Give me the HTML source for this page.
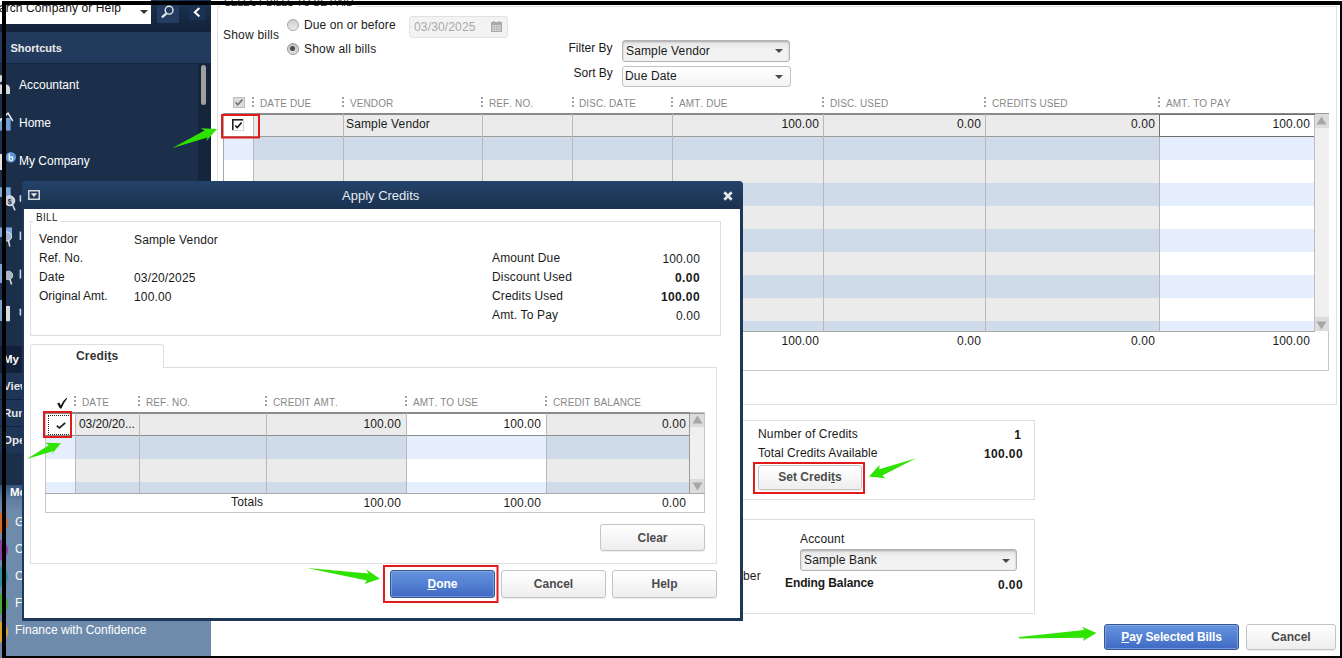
<!DOCTYPE html>
<html>
<head>
<meta charset="utf-8">
<title>Pay Bills - Apply Credits</title>
<style>
*{box-sizing:border-box;margin:0;padding:0}
html,body{width:1342px;height:658px;overflow:hidden;background:#fff}
body{font-family:"Liberation Sans",sans-serif;font-size:12px;color:#1a1a1a;position:relative}
.abs{position:absolute}
.t{position:absolute;white-space:nowrap;line-height:14px;height:14px;letter-spacing:.15px}
.r{text-align:right}
.b{font-weight:bold}
.hdr{position:absolute;white-space:nowrap;font-size:10px;color:#888;line-height:12px;height:12px;letter-spacing:.1px;font-kerning:none}
.dots{position:absolute;width:2px;height:10px;margin-left:-.5px;background:repeating-linear-gradient(to bottom,#a2a2a2 0,#a2a2a2 2px,transparent 2px,transparent 4px)}
.vline{position:absolute;width:1px;background:#b9b9b9}
.box{position:absolute;border:1px solid #dedede}
.btn{position:absolute;border:1px solid #c4c4c4;border-radius:3px;background:linear-gradient(#ffffff,#eeeeee);font-weight:bold;color:#4c4c4c;text-align:center;font-size:12px;box-shadow:0 1px 1px rgba(0,0,0,.08)}
.btn.blue{background:linear-gradient(#6492dc,#5583d4 45%,#3f68c2);border-color:#37558f;color:#fff;box-shadow:inset 0 0 0 1px rgba(150,185,240,.55)}
.sel{position:absolute;border:1px solid #b4b4b4;border-radius:3px;background:linear-gradient(#e4e4e4,#f1f1f1 40%,#f3f3f3);box-shadow:inset 0 1px 2px rgba(0,0,0,.25)}
.sel i{position:absolute;width:0;height:0;border-left:4px solid transparent;border-right:4px solid transparent;border-top:4px solid #4a4a4a}
.red{position:absolute;border:2px solid #e11b1b}
.radio{width:12px;height:12px;border-radius:50%;border:1.500px solid #a8a8a8;background:linear-gradient(#cdcdcd,#ededed)}
.radio.on{border-color:#969696;background:linear-gradient(#c2c2c2,#e2e2e2)}
.radio.on::after{content:"";position:absolute;left:2px;top:2px;width:5px;height:5px;border-radius:50%;background:#4a4a4a}
.side{position:absolute;color:#fff;white-space:nowrap}
u{text-decoration:underline}
</style>
</head>
<body>

<!-- ================= MAIN WINDOW (right) ================= -->
<div id="main" class="abs" style="left:0;top:0;width:1342px;height:658px;background:#fff">
<!-- group: SELECT BILLS TO BE PAID -->
<div class="box" style="left:217px;top:6px;width:1120px;height:399px;border-color:#e0e0e0"></div>
<div class="t" style="left:221px;top:-4px;font-size:10px;color:#222;background:#fff;padding:0 3px;letter-spacing:.07px;font-kerning:none">SELECT BILLS TO BE PAID</div>

<div class="t" style="left:223px;top:28px;letter-spacing:.22px">Show bills</div>
<div class="abs radio" style="left:287px;top:18.500px"></div>
<div class="abs radio on" style="left:287px;top:42.500px"></div>
<div class="t" style="left:304px;top:18px;letter-spacing:.1px">Due on or before</div>
<div class="t" style="left:304px;top:42px;letter-spacing:.22px">Show all bills</div>
<div class="abs" style="left:409px;top:16px;width:99px;height:22px;border:1px solid #e2e2e2;border-radius:3px;background:#f3f3f3"></div>
<div class="t" style="left:414px;top:20px;color:#a9a9a9;letter-spacing:.15px">03/30/2025</div>
<svg class="abs" style="left:491px;top:21px" width="11" height="11" viewBox="0 0 11 11"><rect x="0" y="1" width="11" height="10" fill="#aaa"/><rect x="2" y="0" width="1.5" height="2" fill="#aaa"/><rect x="7.5" y="0" width="1.5" height="2" fill="#aaa"/><g fill="#e6e6e6"><rect x="1.5" y="4" width="1.6" height="1.4"/><rect x="3.7" y="4" width="1.6" height="1.4"/><rect x="5.9" y="4" width="1.6" height="1.4"/><rect x="8.1" y="4" width="1.6" height="1.4"/><rect x="1.5" y="6.2" width="1.6" height="1.4"/><rect x="3.7" y="6.2" width="1.6" height="1.4"/><rect x="5.9" y="6.2" width="1.6" height="1.4"/><rect x="8.1" y="6.2" width="1.6" height="1.4"/><rect x="1.5" y="8.4" width="1.6" height="1.4"/><rect x="3.7" y="8.4" width="1.6" height="1.4"/><rect x="5.9" y="8.4" width="1.6" height="1.4"/><rect x="8.1" y="8.4" width="1.6" height="1.4"/></g></svg>

<div class="t" style="left:568.500px;top:41px;letter-spacing:0">Filter By</div>
<div class="sel" style="left:622px;top:40px;width:168px;height:22px"><i style="left:152px;top:8px"></i></div>
<div class="t" style="left:626px;top:44px">Sample Vendor</div>
<div class="t" style="left:573.500px;top:66px;letter-spacing:0">Sort By</div>
<div class="sel" style="left:622px;top:65.500px;width:169px;height:21px;background:linear-gradient(#fff,#f3f3f3);box-shadow:none;border-color:#c2c2c2"><i style="left:152px;top:8px"></i></div>
<div class="t" style="left:625px;top:69px">Due Date</div>

<!-- header row -->
<svg class="abs" style="left:233px;top:97px" width="12" height="11" viewBox="0 0 12 11"><rect x="0.5" y="0.5" width="11" height="10" fill="#dcdcdc" stroke="#bdbdbd"/><path d="M2.6 5.4 L4.8 7.8 L9.4 2.6" fill="none" stroke="#777" stroke-width="1.7"/></svg>
<div class="dots" style="left:252px;top:97px"></div><div class="hdr" style="left:260px;top:97.500px">DATE DUE</div>
<div class="dots" style="left:342px;top:97px"></div><div class="hdr" style="left:350px;top:97.500px">VENDOR</div>
<div class="dots" style="left:481px;top:97px"></div><div class="hdr" style="left:489px;top:97.500px">REF. NO.</div>
<div class="dots" style="left:572px;top:97px"></div><div class="hdr" style="left:579px;top:97.500px">DISC. DATE</div>
<div class="dots" style="left:671px;top:97px"></div><div class="hdr" style="left:679px;top:97.500px">AMT. DUE</div>
<div class="dots" style="left:822px;top:97px"></div><div class="hdr" style="left:830px;top:97.500px">DISC. USED</div>
<div class="dots" style="left:984px;top:97px"></div><div class="hdr" style="left:992px;top:97.500px">CREDITS USED</div>
<div class="dots" style="left:1158px;top:97px"></div><div class="hdr" style="left:1166px;top:97.500px">AMT. TO PAY</div>

<!-- outer totals box -->
<div class="abs" style="left:223px;top:113px;width:1106px;height:258px;border:1px solid #c6c6c6;border-left-color:#a8a8a8;background:#fff"></div>
<!-- table body stripes -->
<div class="abs" style="left:224px;top:137px;width:29px;height:194px;background:repeating-linear-gradient(to bottom,#e4eefc 0,#e4eefc 23px,#fff 23px,#fff 46px)"></div>
<div class="abs" style="left:253px;top:137px;width:906px;height:194px;background:repeating-linear-gradient(to bottom,#cfdbe9 0,#cfdbe9 23px,#ebebeb 23px,#ebebeb 46px)"></div>
<div class="abs" style="left:1159px;top:137px;width:155px;height:194px;background:repeating-linear-gradient(to bottom,#e4eefc 0,#e4eefc 23px,#fff 23px,#fff 46px)"></div>
<!-- row 1 -->
<div class="abs" style="left:253px;top:114px;width:906px;height:23px;background:#ebebeb"></div>
<div class="abs" style="left:223px;top:113px;width:1092px;height:2px;background:#8a8a8a"></div>
<div class="abs" style="left:223px;top:136px;width:1092px;height:1px;background:#9c9c9c"></div>
<!-- col lines -->
<div class="vline" style="left:253px;top:114px;height:217px"></div>
<div class="vline" style="left:343px;top:114px;height:217px"></div>
<div class="vline" style="left:482px;top:114px;height:217px"></div>
<div class="vline" style="left:572px;top:114px;height:217px"></div>
<div class="vline" style="left:672px;top:114px;height:217px"></div>
<div class="vline" style="left:823px;top:114px;height:217px"></div>
<div class="vline" style="left:985px;top:114px;height:217px"></div>
<div class="vline" style="left:1159px;top:114px;height:217px"></div>
<!-- active cell -->
<div class="abs" style="left:1159px;top:114px;width:156px;height:23px;border:1px solid #6e6e6e;background:#fff"></div>
<!-- table bottom line -->
<div class="abs" style="left:223px;top:331px;width:1092px;height:1px;background:#a8a8a8"></div>
<!-- scrollbar -->
<div class="abs" style="left:1314px;top:115px;width:15px;height:216px;background:#f0f0f0;border-left:1px solid #bdbdbd"></div>
<div class="abs" style="left:1315px;top:113px;width:14px;height:15px;background:#dcdcdc;border-top:1px solid #9a9a9a"></div>
<div class="abs" style="left:1315px;top:317px;width:14px;height:14px;background:#dcdcdc"></div>
<svg class="abs" style="left:1316px;top:116px" width="11" height="9" viewBox="0 0 11 9"><path d="M5.5 0.5 L10.5 8.5 L0.5 8.5 Z" fill="#a6a6a6"/></svg>
<svg class="abs" style="left:1316px;top:320.500px" width="11" height="9" viewBox="0 0 11 9"><path d="M0.5 0.5 L10.5 0.5 L5.5 8.5 Z" fill="#a6a6a6"/></svg>

<!-- row 1 content -->
<svg class="abs" style="left:232px;top:119px" width="12" height="12" viewBox="0 0 12 12"><rect x="0" y="0" width="12" height="12" fill="#d4d4d4"/><rect x="0" y="0" width="11" height="11" fill="#222"/><rect x="1.600" y="1.600" width="9.400" height="9.400" fill="#fff"/><path d="M3.200 6.400 L5.300 8.600 L9.600 3.600" fill="none" stroke="#111" stroke-width="1.500"/></svg>
<div class="t" style="left:346px;top:117px">Sample Vendor</div>
<div class="t r" style="left:719px;width:100px;top:117px">100.00</div>
<div class="t r" style="left:881px;width:100px;top:117px">0.00</div>
<div class="t r" style="left:1055px;width:100px;top:117px">0.00</div>
<div class="t r" style="left:1210px;width:100px;top:117px">100.00</div>
<!-- totals -->
<div class="t r" style="left:719px;width:100px;top:334px">100.00</div>
<div class="t r" style="left:881px;width:100px;top:334px">0.00</div>
<div class="t r" style="left:1055px;width:100px;top:334px">0.00</div>
<div class="t r" style="left:1210px;width:100px;top:334px">100.00</div>

<!-- credits info box -->
<div class="box" style="left:600px;top:420px;width:435px;height:80px"></div>
<div class="t" style="left:758px;top:427px">Number of Credits</div>
<div class="t" style="left:758px;top:446px;letter-spacing:.07px">Total Credits Available</div>
<div class="t r b" style="left:921px;width:100px;top:428px">1</div>
<div class="t r b" style="left:923px;width:100px;top:447px;letter-spacing:.4px">100.00</div>
<div class="btn" style="left:758px;top:465px;width:104px;height:25px;line-height:23px">Set Credi<u>t</u>s</div>

<!-- payment box -->
<div class="box" style="left:600px;top:519px;width:435px;height:95px"></div>
<div class="t" style="left:800px;top:532px">Account</div>
<div class="sel" style="left:800px;top:549px;width:217px;height:22px"><i style="left:201px;top:9px"></i></div>
<div class="t" style="left:804px;top:553px">Sample Bank</div>
<div class="t" style="left:743px;top:569px">ber</div>
<div class="t b" style="left:785px;top:576px;letter-spacing:-.1px">Ending Balance</div>
<div class="t r b" style="left:923px;width:100px;top:578px;letter-spacing:.4px">0.00</div>

<!-- bottom buttons -->
<div class="btn blue" style="left:1104px;top:624px;width:135px;height:26px;line-height:24px;letter-spacing:-.13px"><u>P</u>ay Selected Bills</div>
<div class="btn" style="left:1246px;top:624px;width:90px;height:26px;line-height:24px">Cancel</div>
</div>

<!-- ================= SIDEBAR ================= -->
<div id="sidebar" class="abs" style="left:0;top:0;width:211px;height:658px;background:#1b2f4b;overflow:hidden">
<!-- top search bar -->
<div class="abs" style="left:0;top:0;width:211px;height:32px;background:linear-gradient(#1d3353,#15263f 70%,#13223a)"></div>
<div class="abs" style="left:0;top:0;width:151px;height:24px;background:#fff"></div>
<div class="t" style="left:-16px;top:1px;color:#111;letter-spacing:.1px">Search Company or Help</div>
<svg class="abs" style="left:140px;top:10px" width="8" height="4" viewBox="0 0 8 4"><path d="M0 0 L8 0 L4 4 Z" fill="#333"/></svg>
<div class="abs" style="left:157px;top:0;width:22px;height:23px;background:#223d60"></div>
<svg class="abs" style="left:159px;top:5px" width="18" height="16" viewBox="0 0 18 16"><circle cx="10.100" cy="5.200" r="3.900" fill="none" stroke="#e4e8ee" stroke-width="1.400"/><path d="M7.200 8.600 L2.900 12.400" stroke="#e4e8ee" stroke-width="2.200"/></svg>
<div class="abs" style="left:189px;top:0;width:16px;height:20px;background:#1c3253"></div>
<svg class="abs" style="left:193px;top:7px" width="8" height="11" viewBox="0 0 8 11"><path d="M6.4 1 L1.8 5.3 L6.4 9.6" fill="none" stroke="#fff" stroke-width="2"/></svg>
<!-- Shortcuts header -->
<div class="abs" style="left:0;top:32px;width:211px;height:31px;background:#223b5c"></div>
<div class="abs" style="left:0;top:63px;width:211px;height:1px;background:#14243b"></div>
<div class="side b" style="left:10.500px;top:41px;font-size:11px;line-height:14px;color:#ececec">Shortcuts</div>
<!-- list scrollbar -->
<div class="abs" style="left:198px;top:64px;width:13px;height:282px;background:#15253c"></div>
<div class="abs" style="left:201px;top:65px;width:5px;height:40px;border-radius:2.5px;background:#a0a0a0"></div>
<!-- items -->
<div class="side" style="left:19px;top:78px;line-height:14px">Accountant</div>
<div class="side" style="left:19px;top:116px;line-height:14px">Home</div>
<div class="side" style="left:19px;top:154px;line-height:14px">My Company</div>
<!-- icons (cropped at left) -->
<svg class="abs" style="left:0;top:70px" width="16" height="28" viewBox="0 70 16 28"><circle cx="-0.500" cy="78.600" r="3.600" fill="#d4d8df"/><path d="M-4 94 L-4 84.500 L6.500 84.500 Q10 85 10 89 L10 94 Z" fill="#d4d8df"/></svg>
<svg class="abs" style="left:0;top:108px" width="16" height="28" viewBox="0 108 16 28"><path d="M0 118 L10.600 118 L10.600 130.600 L0 130.600 Z" fill="#6ea0d6"/><path d="M-1 121.500 L8 113.200 L12.800 121" fill="none" stroke="#f0f0f0" stroke-width="1.500"/></svg>
<svg class="abs" style="left:0;top:146px" width="16" height="28" viewBox="0 146 16 28"><rect x="0" y="154" width="2.500" height="16" fill="#e0e0e0"/><circle cx="10.800" cy="157.200" r="5.300" fill="#5e97d2"/><path d="M9.200 153.400 L9.200 160.200 M9.200 158 Q12.600 155.600 12.800 158.600 Q12.400 161.600 9.200 159.800" fill="none" stroke="#fff" stroke-width="1.200"/></svg>
<svg class="abs" style="left:0;top:185px" width="22" height="150" viewBox="0 185 22 150">
<rect x="0" y="187.300" width="10.700" height="9.700" fill="#7da6d8"/><circle cx="9.800" cy="200.800" r="5" fill="#c9ced6" stroke="#e8e8e8" stroke-width="1"/><path d="M12.600 205 L15 210.400" stroke="#e0e0e0" stroke-width="1.500"/><text x="7.800" y="203.600" font-family="Liberation Sans" font-size="7" font-weight="bold" fill="#1b2f4b">$</text>
<rect x="0" y="227.400" width="12" height="9.600" fill="#7da6d8"/><circle cx="7" cy="236.500" r="4.600" fill="#9fb4cf" stroke="#dfe3ea" stroke-width="1"/><path d="M8.400 240 L9.800 246.500" stroke="#e0e0e0" stroke-width="1.500"/>
<rect x="0" y="264" width="2.500" height="19" fill="#7da6d8"/><circle cx="8.500" cy="275.400" r="4.200" fill="#aab3c0" stroke="#c8cdd5" stroke-width="1"/><path d="M9.800 279 L11.600 284.600" stroke="#e0e0e0" stroke-width="1.500"/>
<rect x="0" y="300" width="2.500" height="21" fill="#7da6d8"/><rect x="6" y="306" width="4" height="15.200" fill="#d8dbe0"/>
<g fill="#c8d6ee"><rect x="19.600" y="195" width="1.600" height="7" rx="0.800"/><rect x="19.600" y="231.600" width="1.600" height="8.400"/><rect x="19.600" y="269.600" width="1.600" height="9"/><rect x="19.600" y="308.500" width="1.600" height="7.300" rx="0.800"/></g>
</svg>
<!-- lower sections -->
<div class="abs" style="left:0;top:346px;width:211px;height:27px;background:#13203a"></div>
<div class="abs" style="left:0;top:373px;width:211px;height:80px;background:repeating-linear-gradient(to bottom,#1e3555 0,#1e3555 26px,#13223a 26px,#13223a 27px)"></div>
<div class="side b" style="left:3px;top:352px;font-size:11.5px;line-height:14px">My Shortcuts</div>
<div class="side b" style="left:3px;top:379px;font-size:11.5px;line-height:14px;color:#e6e6e6">View Balances</div>
<div class="side b" style="left:3px;top:406px;font-size:11.5px;line-height:14px;color:#e6e6e6">Run Favorite Reports</div>
<div class="side b" style="left:3px;top:433px;font-size:11.5px;line-height:14px;color:#e6e6e6">Open Windows</div>
<div class="abs" style="left:0;top:485px;width:211px;height:173px;background:#6e8bab"></div>
<div class="abs" style="left:0;top:485px;width:211px;height:26px;background:linear-gradient(#35537a,#5f7d9f 55%,#6e8bab)"></div>
<div class="side b" style="left:10px;top:485px;font-size:11.5px;line-height:14px">More from QuickBooks</div>
<div class="abs" style="left:-14.500px;top:511.5px;width:22px;height:22px;border-radius:50%;background:radial-gradient(circle at 60% 40%,#d2691e,#d2691e)"></div>
<div class="abs" style="left:-14.500px;top:538.5px;width:22px;height:22px;border-radius:50%;background:radial-gradient(circle at 60% 40%,#8a3fa0,#8a3fa0)"></div>
<div class="abs" style="left:-14.500px;top:565.5px;width:22px;height:22px;border-radius:50%;background:radial-gradient(circle at 60% 40%,#2a8f9a,#2a8f9a)"></div>
<div class="abs" style="left:-14.500px;top:592.5px;width:22px;height:22px;border-radius:50%;background:radial-gradient(circle at 60% 40%,#4aa832,#4aa832)"></div>
<div class="abs" style="left:-14.500px;top:621.0px;width:22px;height:22px;border-radius:50%;background:radial-gradient(circle at 60% 40%,#d9a520,#d9a520)"></div>
<div class="side" style="left:15px;top:515px;line-height:14px">Get Payroll</div>
<div class="side" style="left:15px;top:542px;line-height:14px">Client Portal</div>
<div class="side" style="left:15px;top:569px;line-height:14px">Credit Cards</div>
<div class="side" style="left:15px;top:596px;line-height:14px">Financing</div>
<div class="side" style="left:15px;top:623px;line-height:14px">Finance with Confidence</div>
</div>

<!-- ================= DIALOG ================= -->
<div id="dialog" class="abs" style="left:0;top:0;width:1342px;height:658px">
<div class="abs" style="left:21.500px;top:182px;width:721.500px;height:439px;background:#fff;border:solid #1e3859;border-width:0 3px 3px 2.500px;border-radius:4px 4px 0 0"></div>
<div class="abs" style="left:21.500px;top:181px;width:721.500px;height:28px;background:linear-gradient(#24436b,#1e3859 60%,#1b3251);border-radius:4px 4px 0 0"></div>
<svg class="abs" style="left:28px;top:190px" width="12" height="10" viewBox="0 0 12 10"><rect x="0.75" y="0.75" width="10.5" height="8.5" fill="#1f3a5c" stroke="#d8d8d8" stroke-width="1.5"/><path d="M2.800 3.300 L9.200 3.300 L6 7 Z" fill="#e8e8e8"/></svg>
<div class="abs" style="left:342px;top:188px;font-size:13px;line-height:16px;color:#e6eaf0;white-space:nowrap">Apply Credits</div>
<svg class="abs" style="left:723px;top:191px" width="10" height="10" viewBox="0 0 10 10"><path d="M1.3 1.3 L8.7 8.7 M8.7 1.3 L1.3 8.7" stroke="#e6e6e6" stroke-width="2.700"/></svg>

<!-- BILL group -->
<div class="box" style="left:30px;top:221px;width:691px;height:115px"></div>
<div class="t" style="left:33px;top:211px;font-size:10px;color:#222;background:#fff;padding:0 3px;letter-spacing:.3px">BILL</div>
<div class="t" style="left:39px;top:232px">Vendor</div>
<div class="t" style="left:39px;top:251px;letter-spacing:0">Ref. No.</div>
<div class="t" style="left:39px;top:270px">Date</div>
<div class="t" style="left:39px;top:289px;letter-spacing:0">Original Amt.</div>
<div class="t" style="left:134px;top:233px">Sample Vendor</div>
<div class="t" style="left:134px;top:271px">03/20/2025</div>
<div class="t" style="left:134px;top:290px">100.00</div>
<div class="t" style="left:492px;top:251px">Amount Due</div>
<div class="t" style="left:492px;top:270px">Discount Used</div>
<div class="t" style="left:492px;top:289px">Credits Used</div>
<div class="t" style="left:492px;top:308px">Amt. To Pay</div>
<div class="t r" style="left:600px;width:100px;top:252px">100.00</div>
<div class="t r b" style="left:600px;width:100px;top:271px;letter-spacing:.4px">0.00</div>
<div class="t r b" style="left:600px;width:100px;top:290px;letter-spacing:.4px">100.00</div>
<div class="t r" style="left:600px;width:100px;top:309px">0.00</div>

<!-- tab + panel -->
<div class="box" style="left:30px;top:367px;width:687px;height:197px"></div>
<div class="abs" style="left:30px;top:344px;width:134px;height:24px;background:#fff;border:1px solid #dedede;border-bottom:none;border-radius:4px 4px 0 0"></div>
<div class="t b" style="left:76px;top:349px;color:#333">Credi<u>t</u>s</div>

<!-- credits table header -->
<svg class="abs" style="left:56px;top:397px" width="12" height="12" viewBox="0 0 12 12"><path d="M1.2 6.6 L3.2 5.4 L4.8 8.4 Q7 3.6 10.6 0.8 L11.2 1.4 Q8 5.2 5.4 11.4 L4 11.4 Z" fill="#111"/></svg>
<div class="dots" style="left:74px;top:396px"></div><div class="hdr" style="left:82px;top:397px">DATE</div>
<div class="dots" style="left:138px;top:396px"></div><div class="hdr" style="left:146px;top:397px">REF. NO.</div>
<div class="dots" style="left:265px;top:396px"></div><div class="hdr" style="left:273px;top:397px">CREDIT AMT.</div>
<div class="dots" style="left:405px;top:396px"></div><div class="hdr" style="left:413px;top:397px">AMT. TO USE</div>
<div class="dots" style="left:545px;top:396px"></div><div class="hdr" style="left:553px;top:397px">CREDIT BALANCE</div>

<!-- credits table -->
<div class="abs" style="left:45px;top:412px;width:660px;height:101px;border:1px solid #c6c6c6;background:#fff"></div>
<div class="abs" style="left:46px;top:436px;width:29px;height:57px;background:repeating-linear-gradient(to bottom,#e4eefc 0,#e4eefc 23px,#fff 23px,#fff 46px)"></div>
<div class="abs" style="left:75px;top:436px;width:331px;height:57px;background:repeating-linear-gradient(to bottom,#cfdbe9 0,#cfdbe9 23px,#ebebeb 23px,#ebebeb 46px)"></div>
<div class="abs" style="left:406px;top:436px;width:140px;height:57px;background:repeating-linear-gradient(to bottom,#e4eefc 0,#e4eefc 23px,#fff 23px,#fff 46px)"></div>
<div class="abs" style="left:546px;top:436px;width:144px;height:57px;background:repeating-linear-gradient(to bottom,#cfdbe9 0,#cfdbe9 23px,#ebebeb 23px,#ebebeb 46px)"></div>
<div class="abs" style="left:75px;top:413px;width:331px;height:23px;background:#ebebeb"></div>
<div class="abs" style="left:546px;top:413px;width:144px;height:23px;background:#ebebeb"></div>
<div class="abs" style="left:45px;top:412px;width:645px;height:2px;background:#8a8a8a"></div>
<div class="abs" style="left:45px;top:435px;width:645px;height:1px;background:#8c8c8c"></div>
<div class="vline" style="left:75px;top:413px;height:80px"></div>
<div class="vline" style="left:139px;top:413px;height:80px"></div>
<div class="vline" style="left:266px;top:413px;height:80px"></div>
<div class="vline" style="left:406px;top:413px;height:80px"></div>
<div class="vline" style="left:546px;top:413px;height:80px"></div>
<div class="abs" style="left:45px;top:493px;width:660px;height:1px;background:#a8a8a8"></div>
<!-- scrollbar -->
<div class="abs" style="left:689px;top:414px;width:15px;height:79px;background:#f0f0f0;border-left:1px solid #9a9a9a"></div>
<div class="abs" style="left:690px;top:413px;width:14px;height:14px;background:#dcdcdc;border-top:1px solid #9a9a9a"></div>
<div class="abs" style="left:690px;top:479px;width:14px;height:14px;background:#dcdcdc"></div>
<svg class="abs" style="left:691.500px;top:415px" width="11" height="9" viewBox="0 0 11 9"><path d="M5.5 0.5 L10.5 8.5 L0.5 8.5 Z" fill="#a6a6a6"/></svg>
<svg class="abs" style="left:691.500px;top:482px" width="11" height="9" viewBox="0 0 11 9"><path d="M0.5 0.5 L10.5 0.5 L5.5 8.5 Z" fill="#a6a6a6"/></svg>
<!-- row content -->
<div class="abs" style="left:48px;top:415px;width:23px;height:20px;border:1px dotted #222"></div>
<svg class="abs" style="left:56px;top:422px" width="10" height="7" viewBox="0 0 10 7"><path d="M0.8 3.6 L3.4 6 L9.2 0.8" fill="none" stroke="#222" stroke-width="1.7"/></svg>
<div class="t" style="left:79px;top:417px;letter-spacing:-.1px">03/20/20...</div>
<div class="t r" style="left:301px;width:100px;top:417px">100.00</div>
<div class="t r" style="left:441px;width:100px;top:417px">100.00</div>
<div class="t r" style="left:586px;width:100px;top:417px">0.00</div>
<div class="t" style="left:231px;top:495px">Totals</div>
<div class="t r" style="left:301px;width:100px;top:496px">100.00</div>
<div class="t r" style="left:441px;width:100px;top:496px">100.00</div>
<div class="t r" style="left:586px;width:100px;top:496px">0.00</div>

<div class="btn" style="left:600px;top:524px;width:105px;height:27px;line-height:27px">Clear</div>
<div class="btn blue" style="left:390px;top:570px;width:105px;height:28px;line-height:26px"><u>D</u>one</div>
<div class="btn" style="left:501px;top:570px;width:105px;height:28px;line-height:26px">Cancel</div>
<div class="btn" style="left:612px;top:570px;width:105px;height:28px;line-height:26px">Help</div>
</div>

<!-- ================= ANNOTATIONS ================= -->
<svg id="anno" class="abs" style="left:0;top:0" width="1342" height="658" viewBox="0 0 1342 658">
<g fill="none" stroke="#e11b1b" stroke-width="2">
<rect x="222" y="115" width="37" height="22.5"/>
<rect x="44" y="412" width="27" height="25"/>
<rect x="384" y="566" width="113.500" height="36"/>
<rect x="754" y="463" width="110" height="30"/>
</g>
<g fill="#2fe300">
<path d="M172.500 148 L204.500 130.500 L200.700 128.200 L217 129.100 L206.200 141.300 L207.500 137.400 Z"/>
<path d="M26.900 459.100 L48.800 445.300 L45.600 442.700 L60.900 443.200 L51 455.100 L53.500 450.900 Z"/>
<path d="M306.700 568.100 L368.600 573.600 L366.100 569.200 L379.900 578.800 L364.400 584.100 L366.900 580.500 Z"/>
<path d="M916.100 458.300 L879.300 469.200 L879.600 464.900 L869 476.500 L885.300 478.200 L882.300 475.400 Z"/>
<path d="M1018.900 637 L1084.200 630 L1082 626.750 L1096.500 633.100 L1082.800 641.100 L1084.200 637.800 L1018.900 638.600 Z"/>
</g>
</svg>

<!-- ================= BLACK FRAME ================= -->
<div class="abs" style="left:2px;top:1px;width:1340px;height:657px;border-style:solid;border-color:#000;border-width:4px 2px 2px 4px;pointer-events:none"></div>

</body>
</html>
